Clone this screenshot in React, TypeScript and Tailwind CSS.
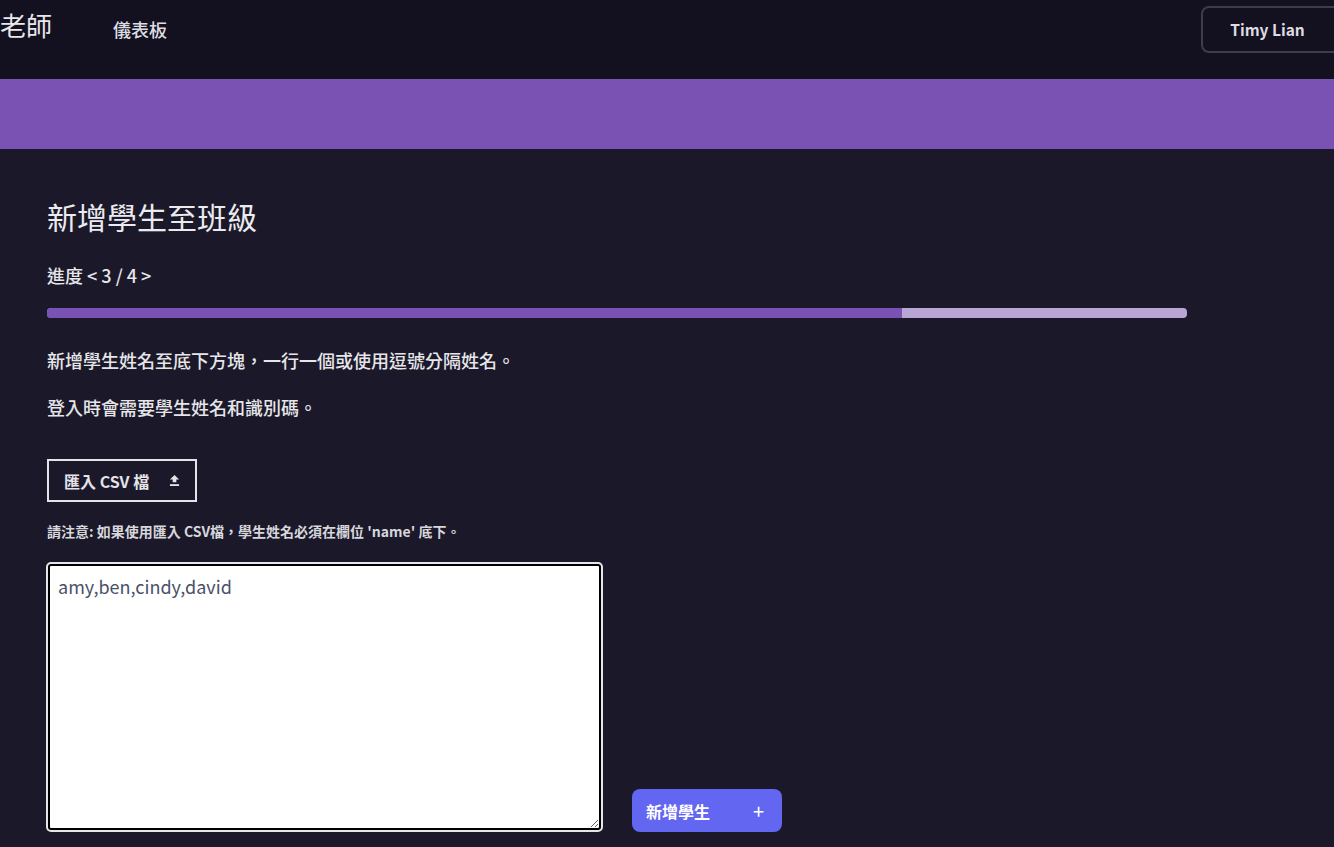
import React from "react";

const font = { fontFamily: '"Noto Sans CJK TC", "Noto Sans", sans-serif' };

function UploadIcon() {
  return (
    <svg viewBox="0 0 12 14" className="h-[13px] w-[11px]" fill="currentColor">
      <path d="M6 1 L11 6 H8 V9 H4 V6 H1 Z" />
      <rect x="1" y="11" width="10" height="2" />
    </svg>
  );
}

export default function App() {
  return (
    <div className="min-h-[847px] bg-[#1b1929] text-[#e6e6ea]" style={font}>
      {/* nav */}
      <header className="flex h-[79px] items-start justify-between bg-[#13111f]">
        <div className="flex items-start">
          <span className="mt-[7px] text-[26px] leading-[36px] text-[#e8e8ec]">老師</span>
          <span className="mt-[16px] ml-[61px] text-[18px] leading-[26px] font-medium text-[#dcdce2]">
            儀表板
          </span>
        </div>
        <button className="mt-[6px] mr-[-12px] h-[47px] w-[145px] rounded-lg border-2 border-[#3d3b4c] pr-[12px] text-[15.5px] font-bold text-[#dcdce2]">
          Timy Lian
        </button>
      </header>

      {/* banner */}
      <div className="h-[70px] bg-[#7952b3]" />

      {/* content */}
      <main className="px-[47px] pt-[47px]">
        <h1 className="text-[30px] leading-[40px] text-[#ebebef]">新增學生至班級</h1>

        <p className="mt-[26px] text-[18px] leading-[26px] font-medium">進度 &lt; 3 / 4 &gt;</p>

        <div className="mt-[20px] flex h-[10px] w-[1140px] overflow-hidden rounded-[4px] bg-[#b8a5d4]">
          <div className="h-full w-[75%] bg-[#7952b3]" />
        </div>

        <p className="mt-[29px] text-[18px] leading-[26px] font-medium">
          新增學生姓名至底下方塊，一行一個或使用逗號分隔姓名。
        </p>
        <p className="mt-[21px] text-[18px] leading-[26px] font-medium">登入時會需要學生姓名和識別碼。</p>

        <button className="mt-[39px] flex h-[43px] w-[150px] items-center gap-[20px] border-2 border-[#e3e3e8] pl-[15px] text-[16px] font-bold text-[#e3e3e8]">
          <span>匯入 CSV 檔</span>
          <UploadIcon />
        </button>

        <p className="mt-[19px] text-[14px] leading-[20px] font-bold text-[#d6d6dc]">
          請注意: 如果使用匯入 CSV檔，學生姓名必須在欄位 'name' 底下。
        </p>

        <div className="mt-[23px] flex items-end gap-[31px]">
          <textarea
            defaultValue="amy,ben,cindy,david"
            className="ml-[1px] h-[266px] w-[553px] rounded-[3px] border-2 border-black bg-white px-[8px] pt-[7px] text-[18px] leading-[26px] text-[#4a5069] outline outline-2 outline-[#e6e6ea]"
            style={font}
          />
          <button className="mb-[-2px] flex h-[43px] w-[150px] items-center justify-between rounded-lg bg-[#6366f1] pr-[18px] pl-[14px] text-[16px] font-bold text-white">
            <span>新增學生</span>
            <span className="text-[20px] font-normal leading-none">+</span>
          </button>
        </div>
      </main>
    </div>
  );
}
